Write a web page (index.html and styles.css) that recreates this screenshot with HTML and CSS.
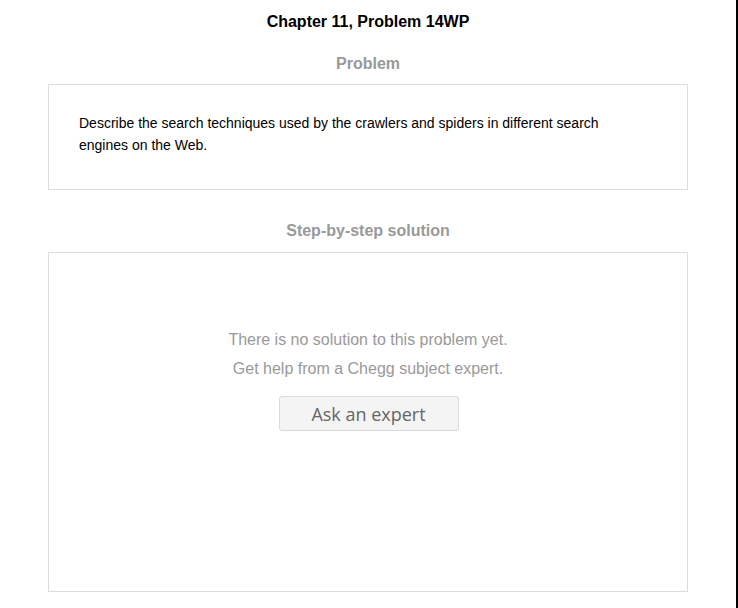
FILE: index.html
```html
<!DOCTYPE html>
<html>
<head>
<meta charset="utf-8">
<link rel="stylesheet" href="styles.css">
</head>
<body>
<div class="page">
  <h1 class="title">Chapter 11, Problem 14WP</h1>
  <h2 class="section-title">Problem</h2>
  <div class="box problem-box">
    <p class="problem-text">Describe the search techniques used by the crawlers and spiders in different search engines on the Web.</p>
  </div>
  <h2 class="section-title solution-title">Step-by-step solution</h2>
  <div class="box solution-box">
    <p class="no-solution">There is no solution to this problem yet.<br>Get help from a Chegg subject expert.</p>
    <button class="ask-btn">Ask an expert</button>
  </div>
</div>
</body>
</html>
```
FILE: styles.css
```css
html, body {
  margin: 0;
  padding: 0;
  background: #fff;
}
.page {
  box-sizing: border-box;
  width: 738px;
  height: 608px;
  border-right: 2px solid #000;
  padding: 0 48px;
  font-family: "Liberation Sans", Arial, sans-serif;
  overflow: hidden;
}
.title {
  margin: 0;
  padding-top: 12px;
  font-size: 16px;
  line-height: 20px;
  font-weight: bold;
  text-align: center;
  color: #000;
}
.section-title {
  margin: 0;
  padding-top: 22px;
  font-size: 16px;
  line-height: 20px;
  font-weight: bold;
  text-align: center;
  color: #999;
}
.solution-title {
  padding-top: 31px;
}
.box {
  border: 1px solid #dcdcdc;
  background: #fff;
}
.problem-box {
  margin-top: 10px;
  padding: 27px 60px 33px 30px;
}
.problem-text {
  margin: 0;
  font-size: 14px;
  line-height: 22px;
  color: #000;
}
.solution-box {
  margin-top: 11px;
  height: 340px;
  padding-top: 72px;
  box-sizing: border-box;
  display: flex;
  flex-direction: column;
  align-items: center;
}
.no-solution {
  margin: 0;
  font-size: 16px;
  line-height: 29px;
  color: #999;
  text-align: center;
}
.ask-btn {
  margin: 13px 0 0 1px;
  width: 180px;
  height: 35px;
  border: 1px solid #dadada;
  border-radius: 3px;
  background: #f4f4f4;
  font-family: "Open Sans", sans-serif;
  font-size: 18px;
  color: #666;
  padding: 0;
}
```
